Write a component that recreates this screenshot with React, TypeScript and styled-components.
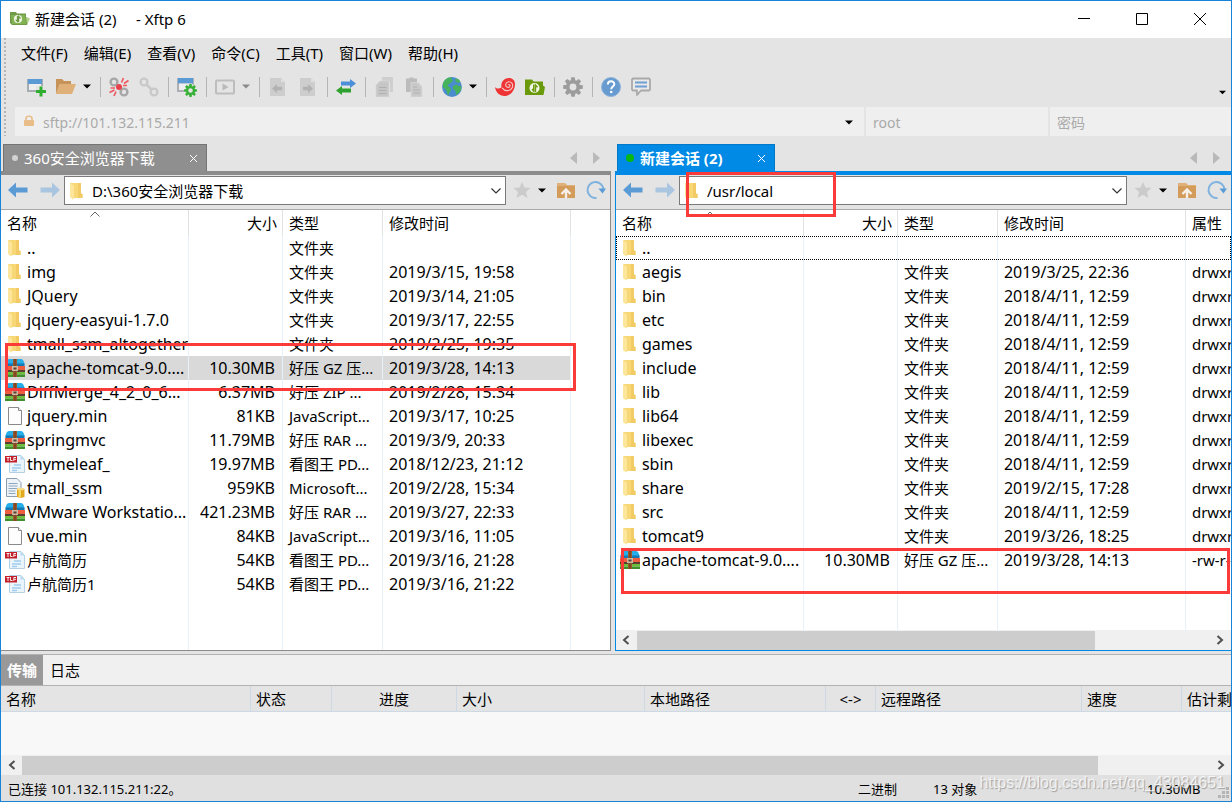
import React from "react";
import styled, { createGlobalStyle, css } from "styled-components";

const LATIN = '"Noto Sans", "Noto Sans CJK SC", sans-serif';

const GlobalStyle = createGlobalStyle`
  *, *::before, *::after { box-sizing: border-box; }
  body { margin: 0; font-family: ${LATIN}; font-size: 15px; line-height: 20px; color: #000; background: #e4e4e4; }
  button, input, select { font: inherit; color: inherit; margin: 0; }
  button { background: none; border: 0; padding: 0; cursor: pointer; }
  svg { display: block; flex: none; }
`;

/* ---------- window frame ---------- */

const Window = styled.div`
  min-height: 100vh;
  display: flex;
  flex-direction: column;
  border: 1px solid #1883d7;
  background: #e4e4e4;
  overflow: hidden;
`;

const TitleBar = styled.header`
  display: flex;
  align-items: center;
  height: 37px;
  padding: 0 2px 2px 9px;
  background: #fff;
`;

const Title = styled.h1`
  margin: 0 auto 0 5px;
  font-size: 15px;
  font-weight: 400;
  white-space: pre;
`;

const WindowButton = styled.button`
  width: 58px;
  height: 34px;
  display: grid;
  place-items: center;
`;

const Strip = styled.div`
  display: flex;
  align-items: stretch;
  margin-bottom: 2px;
  padding-left: 3px;
`;

const Grip = styled.div`
  width: 2px;
  margin-right: 9px;
  background: repeating-linear-gradient(#b4b4b4 0 2px, transparent 2px 4px);
`;

const Bars = styled.div`
  flex: 1;
  min-width: 0;
`;

const MenuBar = styled.nav`
  display: flex;
  gap: 16px;
  height: 30px;
  padding-left: 6px;
  align-items: center;
`;

const ToolBar = styled.div`
  display: flex;
  align-items: center;
  height: 37px;
  padding-left: 6px;
`;

const Tool = styled.button`
  width: 30px;
  height: 30px;
  display: grid;
  place-items: center;
`;

const DropButton = styled.button<{ $dim?: boolean }>`
  width: 15px;
  height: 30px;
  padding-left: 2px;
  display: flex;
  align-items: center;
  color: ${(p) => (p.$dim ? "#8a8a8a" : "#000")};
`;

const ToolDivider = styled.span`
  width: 8px;
  height: 20px;
  background: linear-gradient(#b5b5b5, #b5b5b5) center / 1px 100% no-repeat;
`;

const Overflow = styled.button`
  margin-left: auto;
  padding: 12px 5px 0 0;
`;

const AddressRow = styled.div`
  flex: 1;
  display: grid;
  grid-template-columns: minmax(0, 1fr) 182px 181px;
  gap: 2px;
  color: #aaa;
  font-size: 14px;
`;

const AddressField = styled.label`
  display: flex;
  align-items: center;
  height: 29px;
  padding: 2px 6px 0 7px;
  background: #efefef;
`;

const AddressInput = styled.input`
  flex: 1;
  min-width: 0;
  height: 26px;
  padding: 0;
  border: 0;
  outline: 0;
  background: transparent;
  &::placeholder { color: #aaa; opacity: 1; }
`;

const Lock = styled.span`
  width: 21px;
  padding: 0 0 4px 1px;
`;

/* ---------- file panes ---------- */

const Panes = styled.main`
  flex: 1;
  display: grid;
  grid-template-columns: minmax(0, 99fr) minmax(0, 100fr);
  gap: 4px;
  padding-top: 6px;
`;

const PaneBox = styled.section`
  position: relative;
  display: flex;
  flex-direction: column;
  min-width: 0;
`;

const TabStrip = styled.div`
  display: flex;
  align-items: stretch;
  height: 27px;
  padding: 0 11px 0 2px;
`;

const Tab = styled.button<{ $active: boolean }>`
  display: flex;
  align-items: center;
  width: ${(p) => (p.$active ? 158 : 204)}px;
  padding: 0 8px;
  color: #fff;
  text-align: left;
  white-space: nowrap;
  background: ${(p) => (p.$active ? "#008ae5" : "#8f8f8f")};
  border: 1px solid ${(p) => (p.$active ? "#0078c8" : "#747474")};
  border-bottom: 0;
  font-weight: ${(p) => (p.$active ? 700 : 400)};
`;

const TabDot = styled.span<{ $active: boolean }>`
  width: ${(p) => (p.$active ? 8 : 6)}px;
  height: ${(p) => (p.$active ? 8 : 6)}px;
  margin-right: 6px;
  border-radius: 50%;
  background: ${(p) => (p.$active ? "#0ab814" : "#d2d2d2")};
`;

const TabLabel = styled.span`
  flex: 1;
`;

const TabScroll = styled.div`
  margin-left: auto;
  display: flex;
  align-items: center;
  gap: 14px;
`;

const PaneFrame = styled.div<{ $active: boolean }>`
  flex: 1;
  display: flex;
  flex-direction: column;
  border: 0 solid ${(p) => (p.$active ? "#008ae5" : "#8c8c8c")};
  border-top-width: 4px;
  border-bottom-width: 1px;
  ${(p) => (p.$active ? "border-left-width: 1px;" : "border-right-width: 1px;")}
`;

const NavBar = styled.div`
  display: flex;
  align-items: center;
  height: 35px;
  padding: 0 4px 4px 7px;
  border-bottom: 1px solid #a9a9a9;
`;

const NavButton = styled.button<{ $gap?: number; $lead?: number }>`
  margin: 0 ${(p) => p.$gap ?? 0}px 0 ${(p) => p.$lead ?? 0}px;
`;

const PathBox = styled.label`
  flex: 1;
  min-width: 0;
  display: flex;
  align-items: center;
  height: 29px;
  margin: 1px 7px 0 0;
  padding: 0 4px 0 2px;
  border: 1px solid #7a7a7a;
  background: #fff;
`;

const PathSelect = styled.select`
  flex: 1;
  min-width: 0;
  height: 26px;
  padding: 0;
  margin-left: 5px;
  border: 0;
  outline: 0;
  background: transparent;
  appearance: none;
`;

const TableArea = styled.div`
  flex: 1;
  display: flex;
  background: #fff;
  overflow: hidden;
`;

const FileTable = styled.table`
  flex: 1;
  width: 100%;
  table-layout: fixed;
  border-collapse: separate;
  border-spacing: 0;
  white-space: nowrap;
`;

const Col = styled.col<{ $w?: number }>`
  ${(p) => p.$w && css`width: ${p.$w}px;`}
`;

const HeadCell = styled.th<{ $right?: boolean; $last?: boolean }>`
  position: relative;
  height: 26px;
  padding: ${(p) => (p.$right ? "0 5px 0 0" : "0 0 0 6px")};
  font-weight: 400;
  text-align: ${(p) => (p.$right ? "right" : "left")};
  border-right: ${(p) => (p.$last ? 0 : 1)}px solid #e2e2e2;
  overflow: hidden;
`;

const SortMark = styled.svg`
  position: absolute;
  top: 1px;
  right: 88px;
`;

const Row = styled.tr<{ $focus?: boolean }>`
  ${(p) => p.$focus && css`outline: 1px dotted #000; outline-offset: -1px;`}
`;

const Cell = styled.td<{ $right?: boolean; $sel?: boolean; $last?: boolean; $latin?: boolean }>`
  height: 24px;
  padding: ${(p) => (p.$right ? "0 7px 0 0" : "0 0 0 6px")};
  font-size: ${(p) => (p.$latin ? 16 : 15)}px;
  text-align: ${(p) => (p.$right ? "right" : "left")};
  border-right: ${(p) => (p.$last ? 0 : 1)}px solid #e6f1fb;
  background: ${(p) => (p.$sel && !p.$last ? "#d9d9d9" : "transparent")};
  overflow: hidden;
`;

const FillCell = styled(Cell)`
  height: auto;
  padding: 0;
`;

const FileName = styled.span`
  display: flex;
  align-items: center;
  gap: 2px;
  margin-left: -2px;
  height: 24px;
`;

const Scroll = styled.div`
  display: flex;
  align-items: center;
  height: 20px;
  background: #f0f0f0;
`;

const ScrollArrow = styled.button`
  width: 21px;
  height: 20px;
  display: grid;
  place-items: center;
`;

const Track = styled.div`
  flex: 1;
  height: 19px;
`;

const Thumb = styled.div<{ $size: number }>`
  width: ${(p) => p.$size}%;
  height: 100%;
  background: #cdcdcd;
`;

const Mark = styled.div<{ $l: number; $t: number; $w: string; $h: number }>`
  position: absolute;
  left: ${(p) => p.$l}px;
  top: ${(p) => p.$t}px;
  width: ${(p) => p.$w};
  height: ${(p) => p.$h}px;
  border: 3px solid #fb3b39;
  pointer-events: none;
`;

/* ---------- transfer list and status ---------- */

const Transfers = styled.section`
  margin-top: 3px;
  border-top: 1px solid #b2b2b2;
  background: #f0f0f0;
`;

const LogTabs = styled.div`
  display: flex;
  gap: 1px;
  height: 31px;
  border-bottom: 1px solid #b2b2b2;
`;

const LogTab = styled.button<{ $active?: boolean }>`
  width: 42px;
  color: ${(p) => (p.$active ? "#fff" : "#000")};
  background: ${(p) => (p.$active ? "#999" : "transparent")};
  font-weight: ${(p) => (p.$active ? 700 : 400)};
`;

const TransferArea = styled.div`
  height: 69px;
  background: #f8f8f8;
  overflow: hidden;
`;

const TransferHead = styled.th<{ $center?: boolean; $last?: boolean }>`
  height: 26px;
  padding: 0 0 0 ${(p) => (p.$center ? 0 : 5)}px;
  font-weight: 400;
  text-align: ${(p) => (p.$center ? "center" : "left")};
  background: #e4e4e4;
  border-bottom: 1px solid #cddae6;
  border-right: ${(p) => (p.$last ? 0 : 1)}px solid #cddae6;
  overflow: hidden;
`;

const StatusBar = styled.footer`
  position: relative;
  display: grid;
  grid-template-columns: minmax(0, 1fr) 75px 214px 79px;
  align-items: center;
  height: 26px;
  padding: 1px 5px 0 7px;
  font-size: 13px;
  white-space: nowrap;
  background: #e0e0e0;
`;

const Watermark = styled.span`
  position: absolute;
  right: 6px;
  top: -2px;
  font: 16px/20px "Liberation Sans", sans-serif;
  color: rgba(255, 255, 255, 0.75);
  text-shadow: 1px 1px 1px rgba(120, 120, 120, 0.6);
`;

const SizeGrip = styled.svg`
  position: absolute;
  right: 2px;
  bottom: 2px;
`;

/* ---------- icons ---------- */

const Caret = ({ w = 8 }: { w?: number }) => (
  <svg width={w} height="5" viewBox="0 0 8 5" fill="currentColor"><path d="M0 .5h8L4 4.5z" /></svg>
);

const Icon = ({ children, size = 20 }: { children: React.ReactNode; size?: number }) => (
  <svg width={size} height={size} viewBox="0 0 20 20" fill="none">{children}</svg>
);

const gearTeeth = [0, 45, 90, 135, 180, 225, 270, 315];

const Gear = ({ cx, cy, r, color }: { cx: number; cy: number; r: number; color: string }) => (
  <g transform={`translate(${cx} ${cy}) scale(${r / 10})`}>
    {gearTeeth.map((a) => (
      <path key={a} d="M-2.4-6-1.7-10H1.7L2.4-6z" fill={color} transform={`rotate(${a})`} />
    ))}
    <circle r="5.3" stroke={color} strokeWidth="3.6" fill="none" />
  </g>
);

const AppIcon = () => (
  <svg width="20" height="16" viewBox="0 0 20 16">
    <path d="M0 1h6l1 1.500h9V6l3.500 1.500L17 14H2L0 12z" fill="#6f9a47" />
    <path d="M1 4h14l1 9H2z" fill="#83b252" />
    <path d="M16 6l4 2-3 5z" fill="#b7d58f" />
    <circle cx="8" cy="8" r="4" fill="#f4f8ec" />
    <path d="M7.500 5v5.500L5.600 8.600M8.600 11V5.500l1.900 2" stroke="#6f9a47" strokeWidth="1.300" fill="none" />
  </svg>
);

const NewSession = () => (
  <Icon>
    <path d="M1 2h16v13H1z" fill="#a5acb2" /><path d="M2 2h14v5H2z" fill="#5b9bd5" /><path d="M3 7h12v6H3z" fill="#eee" />
    <path d="M10 9h10v11H10z" fill="#e4e4e4" />
    <path d="M15 9.500v10M10 14.500h10" stroke="#2fae2f" strokeWidth="3" />
  </Icon>
);

const OpenFolder = () => (
  <Icon><path d="M0 17V2h6l2 2h7v3H4z" fill="#c89358" /><path d="M4 7h16l-4 10H0z" fill="#dfb078" /></Icon>
);

const Chain = ({ broken }: { broken?: boolean }) => {
  const c = broken ? "#a6a6a6" : "#c9c9c9";
  return (
    <Icon>
      <circle cx="5" cy="5" r="3.400" stroke={c} strokeWidth="2.400" />
      <circle cx="15" cy="15" r="3.400" stroke={c} strokeWidth="2.400" />
      {broken ? (
        <>
          <path d="M12.500 5.500l2-4.500M15 6.500l4.500-3M14 8.500h4M7 14.500l-2 4.500M5.500 13l-5 2.500M6 11H1.500" stroke="#ed5a62" strokeWidth="1.700" />
          <circle cx="10" cy="10" r="3" fill="#e8404a" />
        </>
      ) : <path d="M7.500 7.500l5 5" stroke={c} strokeWidth="2.600" />}
    </Icon>
  );
};

const SessionProps = () => (
  <Icon>
    <path d="M0 1h17v14H0z" fill="#aab0b5" /><path d="M1 1h15v5.500H1z" fill="#5b9bd5" /><path d="M2 6.500h13V13H2z" fill="#eee" />
    <circle cx="13.500" cy="13.500" r="6.500" fill="#e4e4e4" />
    <Gear cx={13.5} cy={13.5} r={6.5} color="#35b035" />
  </Icon>
);

const Play = () => (
  <Icon><rect x="1" y="3.500" width="18" height="13" rx="1" stroke="#bdbdbd" strokeWidth="2" /><path d="M7.500 6.500l6 3.500-6 3.500z" fill="#b9b9b9" /></Icon>
);

const DocArrow = ({ flip }: { flip?: boolean }) => (
  <Icon>
    <path d="M2 1h11l4 4v14H2z" fill="#cdcdcd" /><path d="M13 1l4 4h-4z" fill="#dedede" />
    <path d="M4 11.500L9 7v2.800h5v3.400H9V16z" fill="#b2b2b2" transform={flip ? "translate(19 0) scale(-1 1)" : undefined} />
  </Icon>
);

const Transfer = () => (
  <Icon>
    <path d="M5 4.500h9V2l6 4.500-6 4.500V8.500H5z" fill="#4a8fd8" />
    <path d="M15 11.500H6V9l-6 4.500L6 18v-2.500h9z" fill="#2fa12f" />
  </Icon>
);

const CopyIcon = ({ paste }: { paste?: boolean }) => (
  <Icon>
    {paste ? (
      <>
        <path d="M2 1.500h3.500V.5h4v1H13V15H2z" fill="#bcbcbc" />
        <path d="M7 5.500h7l4 4V20H7z" fill="#c9c9c9" stroke="#dadada" strokeWidth=".7" />
        <path d="M9 10h4M9 13h7M9 16h7" stroke="#b2b2b2" strokeWidth="1.200" />
      </>
    ) : (
      <>
        <path d="M8 0h11v15h-3V5H8z" fill="#cfcfcf" />
        <path d="M2 8l4-4h9v16H2z" fill="#c6c6c6" stroke="#dadada" strokeWidth=".7" />
        <path d="M5 10.500h7.500M5 13.500h7.500M5 16.500h7.500" stroke="#b0b0b0" strokeWidth="1.200" />
      </>
    )}
  </Icon>
);

const Globe = () => (
  <Icon>
    <circle cx="10" cy="10" r="9.900" fill="#4b8bd0" />
    <path d="M2.500 3.500C4.500 1 7 .2 10 .3L9.500 2l1.500 1.500L9 6 6.500 7 6 9l2.500 2 .5 2.500L7.500 15l-1 3.500C5 17 5 14.500 4 12.500L1 10.500C.2 7.500 1 5.500 2.500 3.500z" fill="#46b35c" />
    <path d="M11 9l3.500-1.500 2 1.500 3 .5c0 4-2.500 7-5.500 8.500l-.5-4-2.500-2z M13 2l3-.2 2.500 3L16.500 6 13.500 4.500z" fill="#46b35c" />
  </Icon>
);

const Xshell = () => (
  <Icon>
    <path d="M0 10c2 2 4 1.800 6.500.5C5.500 5 9 1 14 1c3.500 0 6 2.500 6 6 0 7-5 12-10.500 12C4.500 19 .5 15 0 10z" fill="#ee3434" />
    <path d="M13.300 7.800c1.100-.6 2.200.6 1.500 1.700-1 1.600-3.900 1-4.100-1.300-.3-3.200 4-4.600 6.100-2 2 2.500.4 6.600-3.300 7.300-2.500.5-5-.6-6.300-2.600" stroke="#f3c9c9" strokeWidth="1.100" />
  </Icon>
);

const Xftp = () => (
  <Icon>
    <path d="M0 2.500h7l1.500 2H18v4l2 1.500-1.500 8H0z" fill="#6a9a0c" />
    <circle cx="9.500" cy="11" r="5" fill="#f3f7e8" />
    <path d="M8.700 7.500v6.500L7 12M10.500 15V8l2 2.300" stroke="#6a9a0c" strokeWidth="1.400" />
  </Icon>
);

const Help = () => (
  <Icon>
    <circle cx="10" cy="10" r="9.500" fill="#679bd0" stroke="#8db3dc" />
    <path d="M6.800 7.500c.1-4.200 6.500-4.200 6.500-.3 0 2.300-3.100 2.500-3.100 5" stroke="#fff" strokeWidth="2" /><circle cx="10.200" cy="15" r="1.300" fill="#fff" />
  </Icon>
);

const Feedback = () => (
  <Icon>
    <path d="M2 1.500h16l1 1v10l-1 1h-8l-4 4.500v-4.500H2l-1-1v-10z" fill="#e9e9e9" stroke="#a9a9a9" strokeWidth="1.800" strokeLinejoin="round" />
    <path d="M4 5.500h12M4 9.500h12" stroke="#6f9fd3" strokeWidth="2" />
  </Icon>
);

const Arrow = ({ forward }: { forward?: boolean }) => (
  <svg width="20" height="16" viewBox="0 0 20 16">
    <path d="M0 8l8-7.500v5h11.500v5H8v5z" fill={forward ? "#a9c5e0" : "#5b9bd5"} transform={forward ? "translate(20 0) scale(-1 1)" : undefined} />
  </svg>
);

const Star = () => (
  <svg width="18" height="16" viewBox="0 0 18 16"><path d="M9 0l2.500 5.500 6 .5L13 10l1.500 6L9 12.800 3.500 16 5 10 .5 6l6-.5z" fill="#cbcbcb" /></svg>
);

const UpFolder = () => (
  <svg width="18" height="17" viewBox="0 0 18 17" fill="none">
    <path d="M0 1h8l2 2h8v13H0z" fill="#dfb078" /><path d="M0 4h18v12H0z" fill="#d49c5a" />
    <path d="M9 16V8M4.500 12L9 7.500l4.500 4.500" stroke="#f5f0ea" strokeWidth="2.400" />
  </svg>
);

const Refresh = () => (
  <Icon><path d="M10.500 18A8 8 0 1 1 17.500 9.500" stroke="#7fb2de" strokeWidth="2" /><path d="M12.500 8.500H20l-3.500 5z" fill="#5b9bd5" /></Icon>
);

const FolderSmall = () => (
  <svg width="20" height="18" viewBox="0 0 20 18">
    <path d="M3 1h11v10.500l1.500.5v4H6z" fill="#f8d777" /><path d="M11 1h3v10.500l1.500.5v4H11z" fill="#f2cb66" />
    <path d="M3 1l4 2.500V17l-1 .5L3 15z" fill="#fde59b" />
  </svg>
);

const Archive = () => (
  <svg width="20" height="20" viewBox="0 0 20 20">
    <path d="M4 1h12c2 0 3.500 3 3.500 6H.5C.5 4 2 1 4 1z" fill="#25aee8" /><path d="M.5 5.500h19v3H.5z" fill="#1479b5" />
    <path d="M0 8h20v4.500H0z" fill="#ee5e3e" /><path d="M0 12h20v2H0z" fill="#59402f" /><path d="M0 14h20v2.500H0z" fill="#6bbf3a" /><path d="M0 16.500h20V19H0z" fill="#3f8f2a" />
    <path d="M8 1h4v18H8z" fill="#98592c" /><path d="M9.500 1h1v18h-1z" fill="#6b3c1c" />
    <path d="M7 8h6v5H7z" fill="#c9b8a4" /><path d="M8.500 9.500h3v2h-3z" fill="#5a4030" />
  </svg>
);

const BlankDoc = () => (
  <svg width="20" height="20" viewBox="0 0 20 20" fill="#fdfdfd" stroke="#8a8a8a"><path d="M3.500 1.500h10l3 3v14h-13z" /><path d="M13.500 1.500v3h3" /></svg>
);

const PdfDoc = () => (
  <svg width="20" height="20" viewBox="0 0 20 20" fill="none">
    <path d="M4.500 1.500H16l3.500 4v13h-15z" fill="#eaf4fb" stroke="#b4d0e4" /><path d="M15.500 1.500v4h4z" fill="#b9d9ee" />
    <path d="M9 11h7M7 14h9M7 16.500h5" stroke="#a3cdee" strokeWidth="1.400" />
    <path d="M0 2h12v6.500H0z" fill="#c4202a" /><path d="M1.500 3.500h3M3 3.500V7M5.500 3v3.500h2M8.800 7V3.500H11M9 5.300h2" stroke="#fff" strokeWidth=".9" />
  </svg>
);

const SqlDoc = () => (
  <svg width="20" height="20" viewBox="0 0 20 20">
    <path d="M1.500.5H12l4 4v14H1.500z" fill="#eef3f8" stroke="#8d9db0" /><path d="M3.500 5.500h9M3.500 8h9M3.500 10.500h9M3.500 13h7M3.500 15.500h7" stroke="#8fa6bf" />
    <path d="M12 11v8c1.500 1 6 1 7.500 0v-8z" fill="#e2a91f" /><path d="M13.500 11H16v8.500h-2.500z" fill="#f7d766" /><ellipse cx="15.700" cy="11" rx="3.800" ry="1.300" fill="#f8e08a" />
  </svg>
);

const icons = { folder: FolderSmall, archive: Archive, blank: BlankDoc, pdf: PdfDoc, sql: SqlDoc };

const Triangle = ({ right }: { right?: boolean }) => (
  <svg width="8" height="12" viewBox="0 0 8 12"><path d={right ? "M1 0l7 6-7 6z" : "M7 0L0 6l7 6z"} fill="#b9b9b9" /></svg>
);

const Chevron = ({ right }: { right?: boolean }) => (
  <svg width="8" height="10" viewBox="0 0 8 10" fill="none"><path d={right ? "M1.500 1l4.500 4-4.500 4" : "M6.500 1L2 5l4.500 4"} stroke="#505050" strokeWidth="2" /></svg>
);

/* ---------- data ---------- */

type Kind = keyof typeof icons;
type Entry = { name: string; kind: Kind; size?: string; type: string; time?: string; attr?: string; selected?: boolean; focus?: boolean };

const DIR = "文件夹";
const localFiles: Entry[] = [
  { name: "..", kind: "folder", type: DIR },
  { name: "img", kind: "folder", type: DIR, time: "2019/3/15, 19:58" },
  { name: "JQuery", kind: "folder", type: DIR, time: "2019/3/14, 21:05" },
  { name: "jquery-easyui-1.7.0", kind: "folder", type: DIR, time: "2019/3/17, 22:55" },
  { name: "tmall_ssm_altogether", kind: "folder", type: DIR, time: "2019/2/25, 19:35" },
  { name: "apache-tomcat-9.0....", kind: "archive", size: "10.30MB", type: "好压 GZ 压...", time: "2019/3/28, 14:13", selected: true },
  { name: "DiffMerge_4_2_0_6...", kind: "archive", size: "6.37MB", type: "好压 ZIP ...", time: "2019/2/28, 15:34" },
  { name: "jquery.min", kind: "blank", size: "81KB", type: "JavaScript...", time: "2019/3/17, 10:25" },
  { name: "springmvc", kind: "archive", size: "11.79MB", type: "好压 RAR ...", time: "2019/3/9, 20:33" },
  { name: "thymeleaf_", kind: "pdf", size: "19.97MB", type: "看图王 PD...", time: "2018/12/23, 21:12" },
  { name: "tmall_ssm", kind: "sql", size: "959KB", type: "Microsoft...", time: "2019/2/28, 15:34" },
  { name: "VMware Workstatio...", kind: "archive", size: "421.23MB", type: "好压 RAR ...", time: "2019/3/27, 22:33" },
  { name: "vue.min", kind: "blank", size: "84KB", type: "JavaScript...", time: "2019/3/16, 11:05" },
  { name: "卢航简历", kind: "pdf", size: "54KB", type: "看图王 PD...", time: "2019/3/16, 21:28" },
  { name: "卢航简历1", kind: "pdf", size: "54KB", type: "看图王 PD...", time: "2019/3/16, 21:22" },
];

const remoteDir = (name: string, time = "2018/4/11, 12:59"): Entry => ({ name, kind: "folder", type: DIR, time, attr: "drwxr-xr-x" });
const remoteFiles: Entry[] = [
  { name: "..", kind: "folder", type: "", focus: true },
  remoteDir("aegis", "2019/3/25, 22:36"),
  ...["bin", "etc", "games", "include", "lib", "lib64", "libexec", "sbin"].map((n) => remoteDir(n)),
  remoteDir("share", "2019/2/15, 17:28"),
  remoteDir("src"),
  remoteDir("tomcat9", "2019/3/26, 18:25"),
  { name: "apache-tomcat-9.0....", kind: "archive", size: "10.30MB", type: "好压 GZ 压...", time: "2019/3/28, 14:13", attr: "-rw-r--r--" },
];

const transferColumns: { label: string; w?: number; center?: boolean }[] = [
  { label: "名称", w: 250 }, { label: "状态", w: 81 }, { label: "进度", w: 125, center: true }, { label: "大小", w: 188 },
  { label: "本地路径", w: 181 }, { label: "<->", w: 50, center: true }, { label: "远程路径", w: 206 }, { label: "速度", w: 100 },
  { label: "估计剩余" },
];

const menus = ["文件(F)", "编辑(E)", "查看(V)", "命令(C)", "工具(T)", "窗口(W)", "帮助(H)"];

const isLatin = (s = "") => /^[\x20-\x7e]*$/.test(s);

/* ---------- parts ---------- */

const ScrollBar = ({ size }: { size: number }) => (
  <Scroll>
    <ScrollArrow aria-label="向左滚动"><Chevron /></ScrollArrow>
    <Track><Thumb $size={size} /></Track>
    <ScrollArrow aria-label="向右滚动"><Chevron right /></ScrollArrow>
  </Scroll>
);

type PaneProps = { title: string; path: string; files: Entry[]; remote?: boolean; children?: React.ReactNode };

const Pane = ({ title, path, files, remote = false, children }: PaneProps) => (
  <PaneBox>
    <TabStrip>
      <Tab $active={remote}>
        <TabDot $active={remote} />
        <TabLabel>{title}</TabLabel>
        <svg width="9" height="9" viewBox="0 0 9 9"><path d="M1 1l7 7M8 1L1 8" stroke="#fff" /></svg>
      </Tab>
      <TabScroll><Triangle /><Triangle right /></TabScroll>
    </TabStrip>
    <PaneFrame $active={remote}>
      <NavBar>
        <NavButton $gap={12} aria-label="后退"><Arrow /></NavButton>
        <NavButton $gap={4} aria-label="前进"><Arrow forward /></NavButton>
        <PathBox>
          <FolderSmall />
          <PathSelect aria-label="路径"><option>{path}</option></PathSelect>
          <svg width="10" height="6" viewBox="0 0 10 6" fill="none"><path d="M.5.5L5 5 9.500.5" stroke="#333" strokeWidth="1.200" /></svg>
        </PathBox>
        <NavButton $gap={5} aria-label="收藏"><Star /></NavButton>
        <DropButton aria-label="收藏列表"><Caret w={8} /></DropButton>
        <NavButton $lead={6} $gap={11} aria-label="上一级"><UpFolder /></NavButton>
        <NavButton aria-label="刷新"><Refresh /></NavButton>
      </NavBar>
      <TableArea>
        <FileTable>
          <colgroup><Col $w={188} /><Col $w={94} /><Col $w={100} /><Col $w={188} /><Col /></colgroup>
          <thead>
            <tr>
              <HeadCell>名称<SortMark width="10" height="6" viewBox="0 0 10 6" fill="none"><path d="M.5 5.500L5 1l4.500 4.500" stroke="#666" /></SortMark></HeadCell>
              <HeadCell $right>大小</HeadCell>
              <HeadCell>类型</HeadCell>
              <HeadCell>修改时间</HeadCell>
              <HeadCell $last>{remote ? "属性" : ""}</HeadCell>
            </tr>
          </thead>
          <tbody>
            {files.map((f) => {
              const Glyph = icons[f.kind];
              return (
                <Row key={f.name} $focus={f.focus}>
                  <Cell $sel={f.selected} $latin={isLatin(f.name)}><FileName><Glyph />{f.name}</FileName></Cell>
                  <Cell $sel={f.selected} $right $latin>{f.size}</Cell>
                  <Cell $sel={f.selected}>{f.type}</Cell>
                  <Cell $sel={f.selected} $latin>{f.time}</Cell>
                  <Cell $last>{f.attr}</Cell>
                </Row>
              );
            })}
            <tr aria-hidden="true"><FillCell /><FillCell /><FillCell /><FillCell /><FillCell $last /></tr>
          </tbody>
        </FileTable>
      </TableArea>
      {remote && <ScrollBar size={80} />}
    </PaneFrame>
    {children}
  </PaneBox>
);

export default function App() {
  return (
    <Window>
      <GlobalStyle />
      <TitleBar>
        <AppIcon />
        <Title>{"新建会话 (2)     - Xftp 6"}</Title>
        <WindowButton aria-label="最小化"><svg width="12" height="12"><path d="M0 5.500h12" stroke="#000" /></svg></WindowButton>
        <WindowButton aria-label="最大化"><svg width="12" height="12"><path d="M.5.5h11v11H.5z" stroke="#000" fill="none" /></svg></WindowButton>
        <WindowButton aria-label="关闭"><svg width="12" height="12"><path d="M0 0l12 12M12 0L0 12" stroke="#000" /></svg></WindowButton>
      </TitleBar>
      <Strip>
        <Grip />
        <Bars>
          <MenuBar>{menus.map((m) => <button key={m}>{m}</button>)}</MenuBar>
          <ToolBar>
            <Tool aria-label="新建"><NewSession /></Tool>
            <Tool aria-label="打开"><OpenFolder /></Tool>
            <DropButton aria-label="打开列表"><Caret /></DropButton>
            <ToolDivider />
            <Tool aria-label="断开"><Chain broken /></Tool>
            <Tool aria-label="重新连接"><Chain /></Tool>
            <ToolDivider />
            <Tool aria-label="会话属性"><SessionProps /></Tool>
            <ToolDivider />
            <Tool aria-label="执行"><Play /></Tool>
            <DropButton $dim aria-label="执行列表"><Caret /></DropButton>
            <ToolDivider />
            <Tool aria-label="下载"><DocArrow /></Tool>
            <Tool aria-label="上传"><DocArrow flip /></Tool>
            <ToolDivider />
            <Tool aria-label="同步"><Transfer /></Tool>
            <ToolDivider />
            <Tool aria-label="复制"><CopyIcon /></Tool>
            <Tool aria-label="粘贴"><CopyIcon paste /></Tool>
            <ToolDivider />
            <Tool aria-label="编码"><Globe /></Tool>
            <DropButton aria-label="编码列表"><Caret /></DropButton>
            <ToolDivider />
            <Tool aria-label="Xshell"><Xshell /></Tool>
            <Tool aria-label="Xftp"><Xftp /></Tool>
            <ToolDivider />
            <Tool aria-label="选项"><Icon><Gear cx={10} cy={10} r={9.8} color="#9c9c9c" /></Icon></Tool>
            <ToolDivider />
            <Tool aria-label="帮助"><Help /></Tool>
            <Tool aria-label="反馈"><Feedback /></Tool>
            <Overflow aria-label="更多"><Caret w={7} /></Overflow>
          </ToolBar>
        </Bars>
      </Strip>
      <Strip>
        <Grip />
        <AddressRow>
          <AddressField>
            <Lock>
              <svg width="12" height="12" viewBox="0 0 12 12" fill="none"><path d="M1.500 5.500h9v5h-9z" fill="#e9bd88" stroke="#e9bd88" /><path d="M3 5V3.500c0-3 6-3 6 0V5" stroke="#e9bd88" strokeWidth="1.600" /></svg>
            </Lock>
            <AddressInput aria-label="地址" defaultValue="sftp://101.132.115.211" />
            <DropButton aria-label="地址列表"><Caret /></DropButton>
          </AddressField>
          <AddressField><AddressInput aria-label="用户名" defaultValue="root" /></AddressField>
          <AddressField><AddressInput aria-label="密码" type="password" placeholder="密码" /></AddressField>
        </AddressRow>
      </Strip>
      <Panes>
        <Pane title="360安全浏览器下载" path="D:\360安全浏览器下载" files={localFiles}>
          <Mark $l={4} $t={199} $w="571px" $h={48} />
        </Pane>
        <Pane remote title="新建会话 (2)" path="/usr/local" files={remoteFiles}>
          <Mark $l={71} $t={28} $w="150px" $h={45} />
          <Mark $l={6} $t={404} $w="calc(100% - 7px)" $h={46} />
        </Pane>
      </Panes>
      <Transfers>
        <LogTabs><LogTab $active>传输</LogTab><LogTab>日志</LogTab></LogTabs>
        <TransferArea>
          <FileTable>
            <colgroup>{transferColumns.map((c) => <Col key={c.label} $w={c.w} />)}</colgroup>
            <thead>
              <tr>{transferColumns.map((c) => <TransferHead key={c.label} $center={c.center} $last={!c.w}>{c.label}</TransferHead>)}</tr>
            </thead>
          </FileTable>
        </TransferArea>
        <ScrollBar size={90.6} />
      </Transfers>
      <StatusBar>
        <span>已连接 101.132.115.211:22。</span>
        <span>二进制</span>
        <span>13 对象</span>
        <span>10.30MB</span>
        <Watermark>https://blog.csdn.net/qq_43084651</Watermark>
        <SizeGrip width="12" height="12" fill="#b5b5b5"><path d="M9 0h3v3H9zM5 4h3v3H5zM9 4h3v3H9zM1 8h3v3H1zM5 8h3v3H5zM9 8h3v3H9z" /></SizeGrip>
      </StatusBar>
    </Window>
  );
}
